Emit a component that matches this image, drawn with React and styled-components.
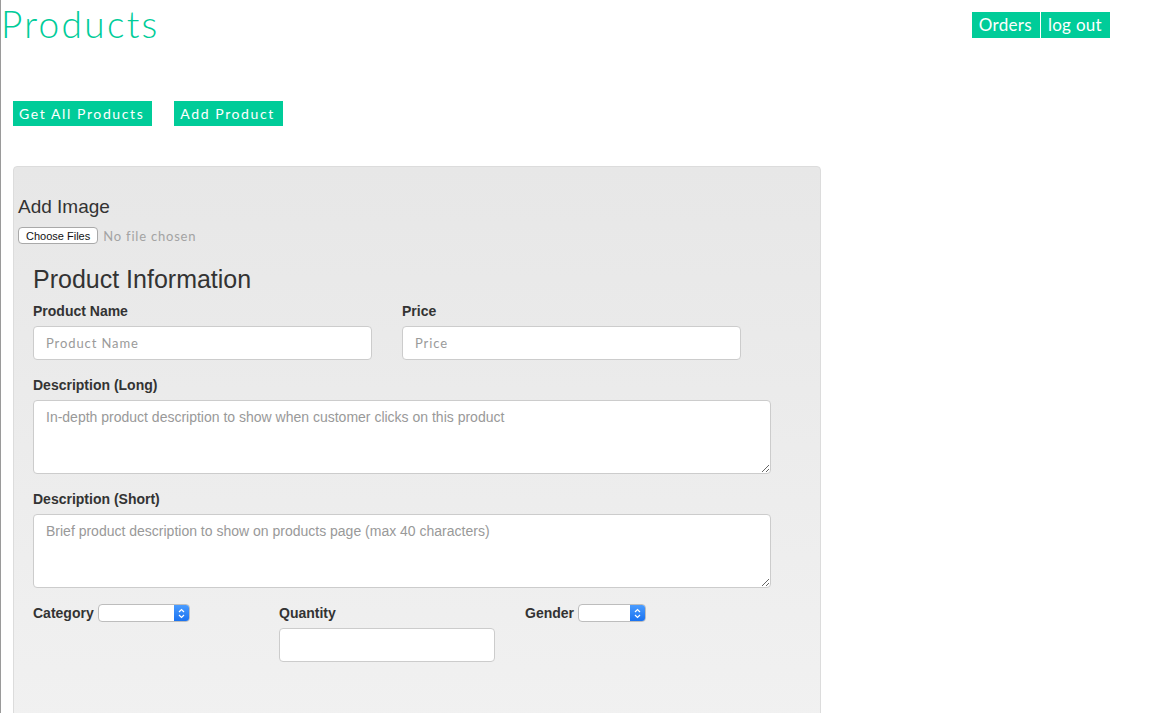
import React from 'react';
import styled, { createGlobalStyle } from 'styled-components';

const GlobalStyle = createGlobalStyle`
  html, body {
    margin: 0;
    padding: 0;
    background: #fff;
  }
  body {
    font-family: "Liberation Sans", Arial, sans-serif;
    color: #333;
    box-shadow: inset 1px 0 0 #9a9a9a;
    min-height: 713px;
    overflow: hidden;
  }
`

const teal = '#00cc99'

const Header = styled.header`
  display: flex;
  justify-content: space-between;
  align-items: flex-start;
  padding: 0 48px 0 1px;
`

const Title = styled.h1`
  margin: 0;
  padding-top: 2px;
  font-family: Lato, "Open Sans", sans-serif;
  font-weight: 300;
  font-size: 37px;
  letter-spacing: 2.3px;
  line-height: 44px;
  color: ${teal};
`

const Nav = styled.nav`
  display: flex;
  gap: 1px;
  margin-top: 12px;
`

const NavLink = styled.a`
  display: block;
  padding: 0 8px 0 7px;
  height: 26px;
  line-height: 26px;
  background: ${teal};
  color: #fff;
  font-family: Lato, "Open Sans", sans-serif;
  font-size: 17px;
  letter-spacing: 0.3px;
  text-decoration: none;
`

const Actions = styled.div`
  display: flex;
  gap: 22px;
  padding: 55px 0 0 13px;
`

const ActionButton = styled.button`
  height: 25px;
  padding: 0 8px 0 6px;
  border: 0;
  background: ${teal};
  color: #fff;
  font-family: Lato, "Open Sans", sans-serif;
  font-size: 14px;
  letter-spacing: 1.6px;
  cursor: pointer;
`

const Panel = styled.section`
  margin: 40px 0 0 13px;
  width: 808px;
  min-height: 560px;
  padding: 29px 4px 0;
  box-sizing: border-box;
  border: 1px solid #dcdcdc;
  border-radius: 4px;
  background: linear-gradient(#e7e7e7, #f1f1f1);
`

const SubTitle = styled.h3`
  margin: 0;
  font-size: 19px;
  font-weight: 400;
  line-height: 22px;
`

const FileRow = styled.div`
  display: flex;
  align-items: center;
  gap: 5px;
  margin-top: 9px;
`

const FileButton = styled.button`
  height: 17px;
  padding: 0 7px;
  border: 1px solid #a9a9a9;
  border-radius: 4px;
  background: #fff;
  font-family: "Liberation Sans", Arial, sans-serif;
  font-size: 11px;
  color: #111;
`

const FileStatus = styled.span`
  font-family: Lato, "Open Sans", sans-serif;
  font-size: 13px;
  letter-spacing: 0.8px;
  color: #a3a3a3;
`

const Form = styled.form`
  padding: 20px 0 0 15px;
  width: 738px;
`

const FormTitle = styled.h2`
  margin: 0 0 7px;
  font-size: 25px;
  font-weight: 400;
  line-height: 30px;
`

const Grid = styled.div`
  display: grid;
  grid-template-columns: ${({ cols }) => cols};
  column-gap: 30px;
`

const Field = styled.div`
  display: flex;
  flex-direction: ${({ inline }) => (inline ? 'row' : 'column')};
  align-items: ${({ inline }) => (inline ? 'flex-start' : 'stretch')};
  gap: ${({ inline }) => (inline ? '4px' : '0')};
  margin-bottom: 15px;
`

const Label = styled.label`
  font-size: 14px;
  font-weight: 700;
  line-height: 20px;
  margin-bottom: 5px;
`

const Input = styled.input`
  height: 34px;
  padding: 0 12px;
  box-sizing: border-box;
  width: 100%;
  border: 1px solid #cccccc;
  border-radius: 4px;
  background: #fff;
  font-family: Lato, "Open Sans", sans-serif;
  font-size: 13px;
  letter-spacing: 0.9px;
  &::placeholder { color: #9a9a9a; }
`

const TextArea = styled.textarea`
  height: 74px;
  padding: 8px 12px;
  box-sizing: border-box;
  width: 100%;
  border: 1px solid #cccccc;
  border-radius: 4px;
  background: #fff;
  font-family: "Liberation Sans", Arial, sans-serif;
  font-size: 14px;
  resize: vertical;
  &::placeholder { color: #999; }
`

const SelectBox = styled.div`
  display: flex;
  width: ${({ w }) => w}px;
  height: 18px;
  margin-top: 1px;
  border: 1px solid #bdbdbd;
  border-radius: 4px;
  background: #fff;
  overflow: hidden;
  box-sizing: border-box;
`

const SelectValue = styled.span`
  flex: 1;
`

const Stepper = styled.span`
  width: 15px;
  display: flex;
  align-items: center;
  justify-content: center;
  background: linear-gradient(#4a9cff, #1a72f0);
`

const Select = ({ w }) => (
  <SelectBox w={w}>
    <SelectValue />
    <Stepper>
      <svg width="7" height="11" viewBox="0 0 7 11" fill="none" stroke="#fff" strokeWidth="1.2">
        <path d="M1 4 L3.5 1.5 L6 4" />
        <path d="M1 7 L3.5 9.5 L6 7" />
      </svg>
    </Stepper>
  </SelectBox>
)

const App = () => (
  <>
    <GlobalStyle />
    <Header>
      <Title>Products</Title>
      <Nav>
        <NavLink href="#">Orders</NavLink>
        <NavLink href="#">log out</NavLink>
      </Nav>
    </Header>
    <Actions>
      <ActionButton>Get All Products</ActionButton>
      <ActionButton>Add Product</ActionButton>
    </Actions>
    <Panel>
      <SubTitle>Add Image</SubTitle>
      <FileRow>
        <FileButton type="button">Choose Files</FileButton>
        <FileStatus>No file chosen</FileStatus>
      </FileRow>
      <Form>
        <FormTitle>Product Information</FormTitle>
        <Grid cols="339px 339px">
          <Field>
            <Label>Product Name</Label>
            <Input placeholder="Product Name" />
          </Field>
          <Field>
            <Label>Price</Label>
            <Input placeholder="Price" />
          </Field>
        </Grid>
        <Field>
          <Label>Description (Long)</Label>
          <TextArea placeholder="In-depth product description to show when customer clicks on this product" />
        </Field>
        <Field>
          <Label>Description (Short)</Label>
          <TextArea placeholder="Brief product description to show on products page (max 40 characters)" />
        </Field>
        <Grid cols="216px 216px 216px">
          <Field inline>
            <Label>Category</Label>
            <Select w={92} />
          </Field>
          <Field>
            <Label>Quantity</Label>
            <Input />
          </Field>
          <Field inline>
            <Label>Gender</Label>
            <Select w={68} />
          </Field>
        </Grid>
      </Form>
    </Panel>
  </>
);

export default App;
